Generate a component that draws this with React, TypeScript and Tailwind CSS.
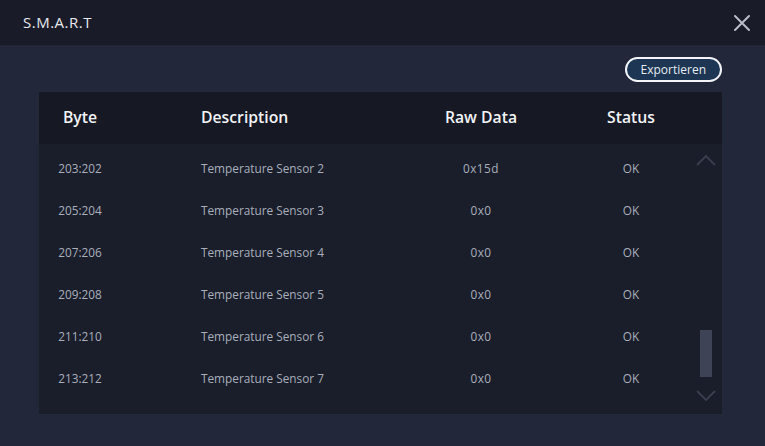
import React from "react";

const rows = [
  ["203:202", "Temperature Sensor 2", "0x15d", "OK"],
  ["205:204", "Temperature Sensor 3", "0x0", "OK"],
  ["207:206", "Temperature Sensor 4", "0x0", "OK"],
  ["209:208", "Temperature Sensor 5", "0x0", "OK"],
  ["211:210", "Temperature Sensor 6", "0x0", "OK"],
  ["213:212", "Temperature Sensor 7", "0x0", "OK"],
];

export default function App() {
  return (
    <div
      className="w-[765px] h-[446px] bg-[#22273a] flex flex-col overflow-hidden"
      style={{ fontFamily: '"Open Sans", "Noto Sans", sans-serif' }}
    >
      <div className="h-[45px] bg-[#191c28] flex items-center justify-between pl-[23px] pr-[14px] shrink-0">
        <span className="text-[15px] text-[#e6e8ee] tracking-[0.5px] leading-none">S.M.A.R.T</span>
        <svg width="18" height="18" viewBox="0 0 18 18" className="text-[#b8bdc8]">
          <path d="M2 2 L16 16 M16 2 L2 16" stroke="currentColor" strokeWidth="2" strokeLinecap="round" />
        </svg>
      </div>
      <div className="flex-1 flex flex-col pl-[39px] pr-[43px] pt-[12px]">
        <div className="flex justify-end">
          <button className="h-[25px] px-[14px] rounded-full border-2 border-[#f2f4f8] bg-[#1c3653] text-[12px] text-[#e8ecf2] leading-none flex items-center">
            Exportieren
          </button>
        </div>
        <div className="mt-[10px] h-[322px] bg-[#1a1e2b] flex flex-col relative">
          <div className="h-[52px] bg-[#161924] flex items-center text-[15.75px] font-semibold text-[#f2f3f6] shrink-0">
            <div className="w-[82px] text-center">Byte</div>
            <div className="w-[250px] pl-[80px]">Description</div>
            <div className="w-[220px] text-center">Raw Data</div>
            <div className="w-[80px] text-center">Status</div>
          </div>
          <div className="pt-[4px] flex flex-col">
            {rows.map((r) => (
              <div key={r[0]} className="h-[42px] flex items-center text-[11.8px] text-[#a9aebb]">
                <div className="w-[82px] text-center">{r[0]}</div>
                <div className="w-[250px] pl-[80px]">{r[1]}</div>
                <div className="w-[220px] text-center tracking-[0.5px]">{r[2]}</div>
                <div className="w-[80px] text-center">{r[3]}</div>
              </div>
            ))}
          </div>
          <div className="absolute right-[6px] top-[62px] bottom-[12px] w-[20px] flex flex-col items-center justify-between">
            <svg width="20" height="12" viewBox="0 0 20 12">
              <path d="M1 11 L10 2 L19 11" stroke="#3a3f50" strokeWidth="1.8" fill="none" />
            </svg>
            <div className="flex-1 flex flex-col justify-end pb-[13px]">
              <div className="w-[12px] h-[47px] bg-[#3e4355]" />
            </div>
            <svg width="20" height="12" viewBox="0 0 20 12">
              <path d="M1 1 L10 10 L19 1" stroke="#3a3f50" strokeWidth="1.8" fill="none" />
            </svg>
          </div>
        </div>
      </div>
    </div>
  );
}
